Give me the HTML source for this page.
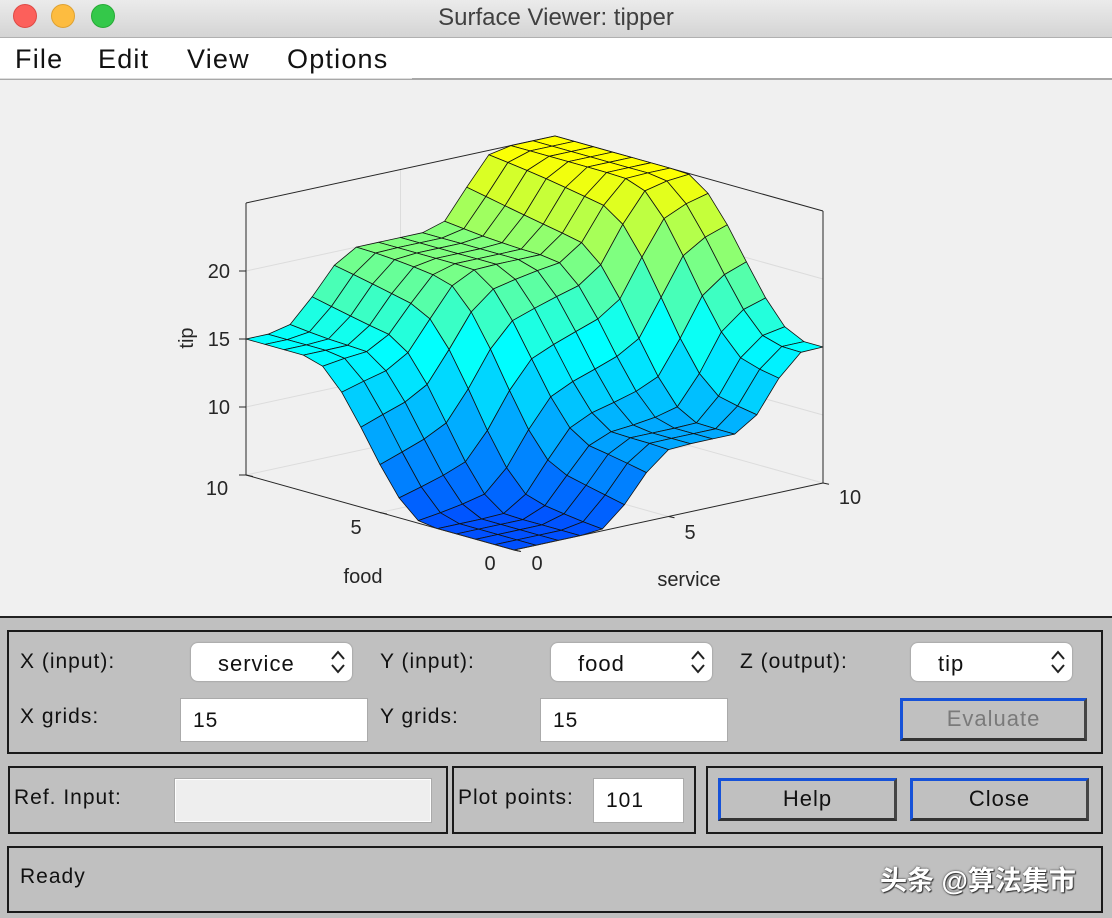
<!DOCTYPE html>
<html><head><meta charset="utf-8"><style>
*{margin:0;padding:0;box-sizing:border-box}
body{width:1112px;height:918px;overflow:hidden;font-family:"Liberation Sans","Noto Sans CJK SC",sans-serif;background:#c0c0c0;position:relative}
.a{position:absolute}
#title{left:0;top:0;width:1112px;height:38px;background:linear-gradient(#ebebeb,#d4d4d4);border-bottom:1px solid #b0b0b0}
.dot{position:absolute;top:4px;width:24px;height:24px;border-radius:50%}
#menu{left:0;top:38px;width:1112px;height:42px;background:#fff;border-bottom:2px solid #a8a8a8}
#menu span{position:absolute;top:6px;font-size:27px;letter-spacing:1.2px;color:#111}
#plot{left:0;top:80px;width:1112px;height:538px;background:#f0f0f0;border-bottom:2px solid #222}
.box{position:absolute;border:2px solid #1a1a1a}
.lbl{position:absolute;font-size:21px;letter-spacing:1px;color:#111}
.pop{position:absolute;background:#fff;border-radius:7px;box-shadow:0 0 1px 1px #aaa;height:38px;font-size:22px;letter-spacing:1px;color:#111}
.pop span{position:absolute;top:8px}
.pop svg{position:absolute;right:6px;top:5px}
.inp{position:absolute;background:#fff;border:1px solid #aaa;box-shadow:inset 0 0 0 1px #fff;font-size:21px;letter-spacing:1px;padding:10px 0 0 12px;color:#111}
.btn{position:absolute;border-top:3px solid #1652d8;border-left:3px solid #1652d8;border-right:3px solid #444;border-bottom:3px solid #333;font-size:22px;letter-spacing:1px;text-align:center;color:#111;padding-top:5px}
</style></head><body>
<div id="title" class="a">
<div class="dot" style="left:13px;background:#fc605b;border:1px solid #de4a45"></div>
<div class="dot" style="left:51px;background:#fdbc40;border:1px solid #dea233"></div>
<div class="dot" style="left:91px;background:#34c84a;border:1px solid #27aa36"></div>
<div class="a" style="left:0;width:1112px;top:4px;text-align:center;font-size:24px;color:#404040">Surface Viewer: tipper</div>
</div>
<div id="menu" class="a"><span style="left:15px">File</span><span style="left:98px">Edit</span><span style="left:187px">View</span><span style="left:287px">Options</span>
<div class="a" style="left:0;top:40px;width:412px;height:1px;background:#ddd"></div></div>
<div id="plot" class="a"><svg id="sv" width="1112" height="538" viewBox="0 80 1112 538"></svg></div>

<div class="box" style="left:7px;top:630px;width:1096px;height:124px"></div>
<div class="lbl" style="left:20px;top:650px">X (input):</div>
<div class="pop" style="left:191px;top:643px;width:161px"><span style="left:27px">service</span><svg width="16" height="28"><path d="M2 11L8 4L14 11M2 17L8 24L14 17" fill="none" stroke="#222" stroke-width="2"/></svg></div>
<div class="lbl" style="left:380px;top:650px">Y (input):</div>
<div class="pop" style="left:551px;top:643px;width:161px"><span style="left:27px">food</span><svg width="16" height="28"><path d="M2 11L8 4L14 11M2 17L8 24L14 17" fill="none" stroke="#222" stroke-width="2"/></svg></div>
<div class="lbl" style="left:740px;top:650px">Z (output):</div>
<div class="pop" style="left:911px;top:643px;width:161px"><span style="left:27px">tip</span><svg width="16" height="28"><path d="M2 11L8 4L14 11M2 17L8 24L14 17" fill="none" stroke="#222" stroke-width="2"/></svg></div>
<div class="lbl" style="left:20px;top:705px">X grids:</div>
<div class="inp" style="left:180px;top:698px;width:188px;height:44px">15</div>
<div class="lbl" style="left:380px;top:705px">Y grids:</div>
<div class="inp" style="left:540px;top:698px;width:188px;height:44px">15</div>
<div class="btn" style="left:900px;top:698px;width:187px;height:43px;color:#7a7a7a">Evaluate</div>

<div class="box" style="left:8px;top:766px;width:440px;height:68px"></div>
<div class="lbl" style="left:14px;top:786px">Ref. Input:</div>
<div class="inp" style="left:174px;top:778px;width:258px;height:45px;background:#eee"></div>
<div class="box" style="left:452px;top:766px;width:244px;height:68px"></div>
<div class="lbl" style="left:458px;top:786px">Plot points:</div>
<div class="inp" style="left:593px;top:778px;width:91px;height:45px">101</div>
<div class="box" style="left:706px;top:766px;width:397px;height:68px"></div>
<div class="btn" style="left:718px;top:778px;width:179px;height:43px">Help</div>
<div class="btn" style="left:910px;top:778px;width:179px;height:43px">Close</div>

<div class="box" style="left:7px;top:846px;width:1096px;height:67px"></div>
<div class="lbl" style="left:20px;top:865px">Ready</div>
<div class="a" style="left:880px;top:859px;font-size:27px;color:#fff;font-weight:bold;text-shadow:0 0 2px #333,1px 1px 1px #333">头条 @算法集市</div>

<script>
var NS="http://www.w3.org/2000/svg",sv=document.getElementById('sv');
function P(s,f,z){return [514+s*30.9-f*26.8, 550-s*6.7-f*7.5-(z-5)*13.6];}
function el(t,a,txt){var e=document.createElementNS(NS,t);for(var k in a)e.setAttribute(k,a[k]);if(txt)e.textContent=txt;sv.appendChild(e);return e;}
function ln(a,b,c,w){el('line',{x1:a[0],y1:a[1],x2:b[0],y2:b[1],stroke:c,'stroke-width':w||1});}
var g='#dcdcdc';
[10,15,20].forEach(function(z){ln(P(0,10,z),P(10,10,z),g);ln(P(10,10,z),P(10,0,z),g);});
ln(P(5,10,5),P(5,10,25),g);ln(P(10,5,5),P(10,5,25),g);
ln(P(5,0,5),P(5,10,5),g);ln(P(0,5,5),P(10,5,5),g);
ln(P(0,10,5),P(10,10,5),g);ln(P(10,10,5),P(10,0,5),g);
var k='#262626';
ln(P(0,10,25),P(10,10,25),k);ln(P(10,10,25),P(10,0,25),k);
function sm(t){t=Math.max(0,Math.min(1,t));return t*t*(3-2*t);}
function Z(s,f){
 var fs=3.2-0.25*s;
 var a=2.6-0.16*f, b=7.2-0.12*f;
 return 5+10*sm((f-fs)/4.5)+5*sm((s-a)/2.6)+5*sm((s-b)/2.2);}
function col(z){var t=(z-5)/20,r,gg,b;
 if(t<0.5){var u=t/0.5;r=0;gg=80+175*u;b=255;}
 else{var u=(t-0.5)/0.5;r=255*u;gg=255;b=255*(1-u);}
 return 'rgb('+Math.round(r)+','+Math.round(gg)+','+Math.round(b)+')';}
var N=15,d=10/(N-1),faces=[];
for(var i=0;i<N-1;i++)for(var j=0;j<N-1;j++)faces.push([i,j]);
faces.sort(function(a,b){return (b[0]+b[1])-(a[0]+a[1]);});
faces.forEach(function(q){var s0=q[0]*d,f0=q[1]*d,s1=s0+d,f1=f0+d;
 var z=[Z(s0,f0),Z(s1,f0),Z(s1,f1),Z(s0,f1)];
 var pts=[P(s0,f0,z[0]),P(s1,f0,z[1]),P(s1,f1,z[2]),P(s0,f1,z[3])];
 el('polygon',{points:pts.map(function(p){return p[0].toFixed(1)+','+p[1].toFixed(1)}).join(' '),fill:col((z[0]+z[1]+z[2]+z[3])/4),stroke:'#111','stroke-width':0.8,'stroke-linejoin':'round'});});
ln(P(0,10,5),P(0,10,25),k);ln(P(10,0,5),P(10,0,25),k);
ln(P(0,10,5),P(0,0,5),k);ln(P(0,0,5),P(10,0,5),k);
[10,15,20].forEach(function(z){var p=P(0,10,z);ln(p,[p[0]-7,p[1]],k);el('text',{x:p[0]-16,y:p[1]+7,'text-anchor':'end','font-size':20,fill:'#262626','font-family':'Liberation Sans'},''+z);});
var t=P(0,10,5);ln(t,[t[0]-7,t[1]],k);
var ts={'font-size':20,fill:'#262626','font-family':'Liberation Sans','text-anchor':'middle'};
function tx(x,y,s){var a=Object.assign({x:x,y:y},ts);el('text',a,s);}
tx(217,495,'10');tx(356,534,'5');tx(490,570,'0');
tx(537,570,'0');tx(690,539,'5');tx(850,504,'10');
tx(363,583,'food');tx(689,586,'service');
el('text',Object.assign({x:0,y:0,transform:'translate(193,338) rotate(-90)'},ts),'tip');
[0,5,10].forEach(function(f){var p=P(0,f,5);ln(p,[p[0]+7,p[1]+1.5],k);});
[0,5,10].forEach(function(s){var p=P(s,0,5);ln(p,[p[0]+6,p[1]+1.3],k);});
</script>
</body></html>
